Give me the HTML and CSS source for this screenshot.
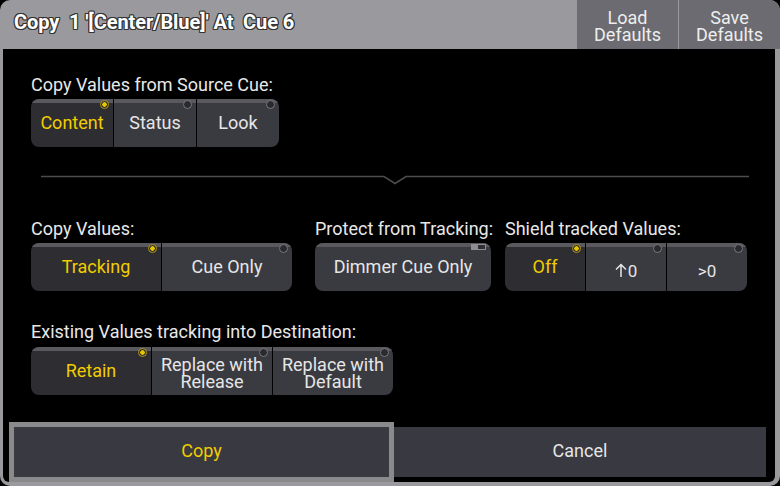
FILE: index.html
```html
<!DOCTYPE html>
<html lang="en">
<head>
    <meta charset="UTF-8">
    <title>Copy Cue</title>
    <link rel="stylesheet" href="styles.css">
</head>
<body>
    <div class="window">
        <div class="titlebar">
            <div class="title">Copy  1 '[Center/Blue]' At  Cue 6</div>
            <button class="tb-btn">Load<br>Defaults</button>
            <button class="tb-btn last">Save<br>Defaults</button>
        </div>

        <div class="content">
            <div class="field">
                <div class="label">Copy Values from Source Cue:</div>
                <div class="group">
                    <div class="opt on w82">Content<span class="radio"></span></div>
                    <div class="opt w82">Status<span class="radio"></span></div>
                    <div class="opt w82">Look<span class="radio"></span></div>
                </div>
            </div>

            <div class="divider">
                <svg width="708" height="10" viewBox="0 0 708 10">
                    <polyline points="0,1.5 343,1.5 354,8.5 365,1.5 708,1.5" fill="none" stroke="#4c4c4f" stroke-width="1.5"/>
                </svg>
            </div>

            <div class="row">
                <div class="field">
                    <div class="label">Copy Values:</div>
                    <div class="group">
                        <div class="opt on w130">Tracking<span class="radio"></span></div>
                        <div class="opt w130">Cue Only<span class="radio"></span></div>
                    </div>
                </div>
                <div class="field protect">
                    <div class="label">Protect from Tracking:</div>
                    <div class="group">
                        <div class="opt w176">Dimmer Cue Only<span class="toggle"><span class="knob"></span></span></div>
                    </div>
                </div>
                <div class="field shield">
                    <div class="label">Shield tracked Values:</div>
                    <div class="group">
                        <div class="opt on w80">Off<span class="radio"></span></div>
                        <div class="opt w80 small">
                            <svg class="arrow" width="12" height="14" viewBox="0 0 12 14">
                                <path d="M6 1.5 V14 M1 6.5 L6 1.5 L11 6.5" fill="none" stroke="#e6e6e6" stroke-width="1.5"/>
                            </svg>0<span class="radio"></span>
                        </div>
                        <div class="opt w80 small">&gt;0<span class="radio"></span></div>
                    </div>
                </div>
            </div>

            <div class="field existing">
                <div class="label">Existing Values tracking into Destination:</div>
                <div class="group">
                    <div class="opt on w120">Retain<span class="radio"></span></div>
                    <div class="opt w120 two">Replace with<br>Release<span class="radio"></span></div>
                    <div class="opt w120 two">Replace with<br>Default<span class="radio"></span></div>
                </div>
            </div>

            <div class="footer">
                <button class="big focus">Copy</button>
                <button class="big">Cancel</button>
            </div>
        </div>
    </div>
</body>
</html>
```

FILE: styles.css
```css
body {
    margin: 0;
    background-color: #000;
    font-family: Roboto, "Liberation Sans", sans-serif;
}
.window {
    width: 780px;
    height: 486px;
    background-color: #9a9a9e;
    border-radius: 10px;
    overflow: hidden;
    display: flex;
    flex-direction: column;
}
.titlebar {
    height: 49px;
    display: flex;
    align-items: stretch;
}
.title {
    flex: 1;
    padding-left: 14px;
    padding-top: 10px;
    font-size: 20px;
    font-weight: bold;
    letter-spacing: -0.1px;
    white-space: pre;
    color: #fff;
    text-shadow: -1px -1px 0 #333, 1px -1px 0 #333, -1px 1px 0 #333, 1px 1px 0 #333,
                 0 -1px 0 #333, 0 1px 0 #333, -1px 0 0 #333, 1px 0 0 #333;
}
.tb-btn {
    width: 101px;
    margin: 0;
    padding: 0;
    border: none;
    background-color: #6b6b71;
    color: #eee;
    font-family: inherit;
    font-size: 18px;
    line-height: 17px;
    padding-top: 2px;
}
.tb-btn.last {
    margin-left: 1px;
    border-top-right-radius: 10px;
}
.content {
    height: 433px;
    margin: 0 5px 0 3px;
    box-sizing: border-box;
    background-color: #000;
    border-radius: 0 0 6px 6px;
    padding: 26px 0 0 28px;
    display: flex;
    flex-direction: column;
}
.label {
    color: #e8e8e8;
    font-size: 18px;
    line-height: 20px;
    height: 20px;
    white-space: nowrap;
}
.group {
    margin-top: 4px;
    display: flex;
    gap: 1px;
    background-color: #000;
    border-radius: 8px;
    overflow: hidden;
    align-self: flex-start;
}
.field {
    display: flex;
    flex-direction: column;
}
.opt {
    position: relative;
    height: 48px;
    box-sizing: border-box;
    border-top: 4px solid #59595e;
    background-color: #3a3a41;
    color: #e6e6e6;
    font-size: 18px;
    display: flex;
    align-items: center;
    justify-content: center;
    text-align: center;
    padding-bottom: 5px;
}
.opt.on {
    background-color: #2d2d32;
    color: #f2cc00;
}
.opt.two {
    line-height: 17px;
    padding-bottom: 1px;
}
.opt.small {
    font-size: 17px;
    padding: 4px 0 0;
}
.arrow {
    margin: 0 1px 2px 0;
}
.w80 { width: 80px; }
.w82 { width: 82px; }
.w120 { width: 120px; }
.w130 { width: 130px; }
.w176 { width: 176px; }
.radio {
    position: absolute;
    top: -3px;
    right: 4px;
    width: 9px;
    height: 9px;
    box-sizing: border-box;
    border: 1.5px solid #78787c;
    border-radius: 50%;
    background-color: #2a2a2e;
}
.opt.on .radio {
    border-color: #b09618;
    background: radial-gradient(circle, #e8c400 0 2px, #2a2a2e 2.5px);
}
.toggle {
    position: absolute;
    top: -3px;
    right: 5px;
    width: 15px;
    height: 6px;
    box-sizing: border-box;
    border: 1px solid #8e8e92;
    background-color: #8e8e92;
}
.knob {
    position: absolute;
    right: 0;
    top: 0;
    width: 7px;
    height: 4px;
    background-color: #2e2e33;
}
.divider {
    margin: 28px 0 0 10px;
    height: 10px;
}
.divider svg {
    display: block;
}
.row {
    margin-top: 34px;
    display: flex;
}
.protect {
    width: 176px;
    margin-left: 23px;
}
.shield {
    margin-left: 14px;
}
.existing {
    margin-top: 31px;
}
.existing .group {
    margin-top: 5px;
}
.footer {
    margin: 27px 0 0 -22px;
    display: flex;
    align-items: center;
}
.big {
    margin: 0;
    width: 372px;
    height: 50px;
    border: none;
    background-color: #393941;
    color: #e6e6e6;
    font-family: inherit;
    font-size: 18px;
    padding: 0 0 3px;
}
.big.focus {
    width: 385px;
    height: 60px;
    border: 5px solid #8a8a8c;
    color: #f2cc00;
}
```
